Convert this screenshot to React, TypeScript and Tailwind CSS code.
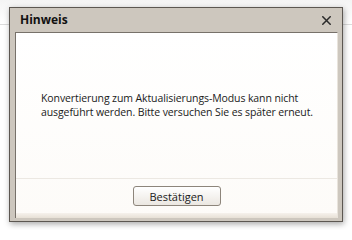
export default function App() {
  return (
    <div className="relative w-[352px] h-[230px] overflow-hidden bg-white" style={{ fontFamily: '"Open Sans", "Noto Sans", sans-serif' }}>
      {/* page behind the dialog */}
      <div className="h-[25px] border-b border-[#dcdcdc] bg-gradient-to-b from-[#f4f4f4] to-white" />

      <div className="absolute left-[9px] top-[7px] w-[334px] h-[215px] flex flex-col border border-[#5c5751] bg-[#cdc7be] shadow-[1px_2px_6px_rgba(0,0,0,0.35)]">
        <div className="h-[24px] shrink-0 flex items-center justify-between pl-[10px] pr-[11px]">
          <span className="text-[12px] font-bold text-[#111] leading-none">Hinweis</span>
          <svg width="9" height="9" viewBox="0 0 9 9" className="text-[#2b2b2b]">
            <path d="M0.8 0.8 L8.2 8.2 M8.2 0.8 L0.8 8.2" stroke="currentColor" strokeWidth="1.5" strokeLinecap="square" />
          </svg>
        </div>

        <div className="flex-1 ml-[5px] mr-[4px] mb-[3px] flex flex-col border-t border-l border-[#77716a] border-r border-r-[#e9e4dc] bg-gradient-to-b from-white to-[#fdfbf8]">
          <div className="flex-1 pl-[25px] pt-[59px] text-[10.5px] leading-[13.5px] text-[#1a1a1a] tracking-[-0.1px]">
            <p>Konvertierung zum Aktualisierungs-Modus kann nicht</p>
            <p>ausgeführt werden. Bitte versuchen Sie es später erneut.</p>
          </div>

          <div className="h-[40px] shrink-0 border-t border-[#ece8e2] flex flex-col">
            <div className="flex-1 flex items-center justify-center">
              <button className="w-[88px] h-[20px] rounded-[3px] border border-[#8d857b] bg-gradient-to-b from-white to-[#ebe7e1] text-[11px] leading-none text-[#1a1a1a]">
                Bestätigen
              </button>
            </div>
            <div className="h-[5px] bg-gradient-to-b from-[#f6f2ec] to-[#e7e0d6]" />
          </div>
        </div>
      </div>
    </div>
  );
}
